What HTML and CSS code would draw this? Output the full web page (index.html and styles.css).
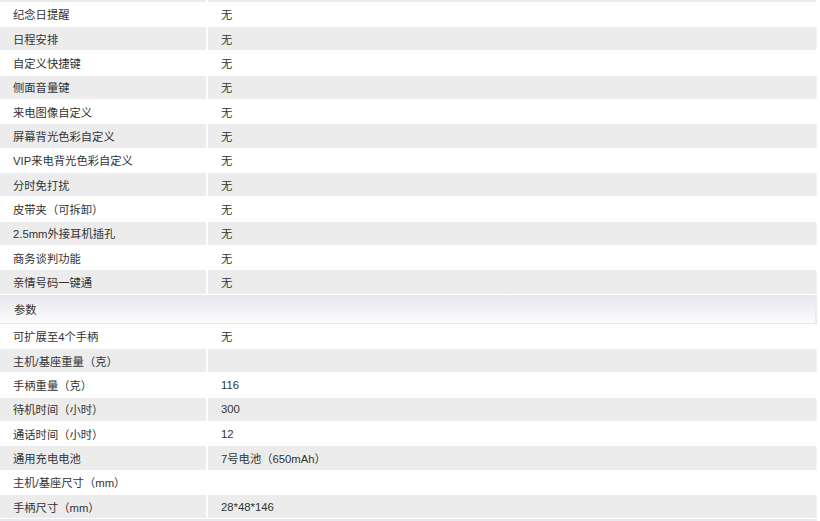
FILE: index.html
```html
<!DOCTYPE html>
<html lang="zh-CN">
<head>
<meta charset="utf-8">
<title>参数</title>
<link rel="stylesheet" href="styles.css">
</head>
<body>
<div class="spec">
  <div class="row alt"><div class="k"></div><div class="v"></div></div>
  <div class="row"><div class="k">纪念日提醒</div><div class="v">无</div></div>
  <div class="row alt"><div class="k">日程安排</div><div class="v">无</div></div>
  <div class="row"><div class="k">自定义快捷键</div><div class="v">无</div></div>
  <div class="row alt"><div class="k">侧面音量键</div><div class="v">无</div></div>
  <div class="row"><div class="k">来电图像自定义</div><div class="v">无</div></div>
  <div class="row alt"><div class="k">屏幕背光色彩自定义</div><div class="v">无</div></div>
  <div class="row"><div class="k">VIP来电背光色彩自定义</div><div class="v">无</div></div>
  <div class="row alt"><div class="k">分时免打扰</div><div class="v">无</div></div>
  <div class="row"><div class="k">皮带夹（可拆卸）</div><div class="v">无</div></div>
  <div class="row alt"><div class="k">2.5mm外接耳机插孔</div><div class="v">无</div></div>
  <div class="row"><div class="k">商务谈判功能</div><div class="v">无</div></div>
  <div class="row alt"><div class="k">亲情号码一键通</div><div class="v">无</div></div>
  <div class="head">参数</div>
  <div class="row"><div class="k">可扩展至4个手柄</div><div class="v">无</div></div>
  <div class="row alt"><div class="k">主机/基座重量（克）</div><div class="v"></div></div>
  <div class="row"><div class="k">手柄重量（克）</div><div class="v">116</div></div>
  <div class="row alt"><div class="k">待机时间（小时）</div><div class="v">300</div></div>
  <div class="row"><div class="k">通话时间（小时）</div><div class="v">12</div></div>
  <div class="row alt"><div class="k">通用充电电池</div><div class="v">7号电池（650mAh）</div></div>
  <div class="row"><div class="k">主机/基座尺寸（mm）</div><div class="v"></div></div>
  <div class="row alt"><div class="k">手柄尺寸（mm）</div><div class="v">28*48*146</div></div>
  <div class="head"></div>
</div>
</body>
</html>
```

FILE: styles.css
```css
html, body {
  margin: 0;
  padding: 0;
  background: #ffffff;
}
body {
  font-family: "Liberation Sans", "Noto Sans CJK SC", sans-serif;
  font-size: 11.3px;
  color: #333333;
  overflow: hidden;
}
.spec {
  width: 817px;
  margin-top: -21.67px;
  display: flex;
  flex-direction: column;
  gap: 1px;
}
.row {
  display: grid;
  grid-template-columns: 206px 609px;
  column-gap: 2px;
  height: 23.33px;
}
.row .k,
.row .v {
  display: flex;
  align-items: center;
  padding-left: 13px;
  white-space: nowrap;
}
.row.alt .k,
.row.alt .v {
  background: #ececec;
}
.row.alt .v {
  border-right: 1px solid #f4f4f4;
}
.head {
  height: 28px;
  display: flex;
  align-items: center;
  padding-left: 14px;
  background: linear-gradient(#e7e7ee, #fbfbfb);
  border-right: 2px solid #ebebeb;
  border-bottom: 1px solid #e6e6e6;
  box-sizing: content-box;
  width: 801px;
}
```
